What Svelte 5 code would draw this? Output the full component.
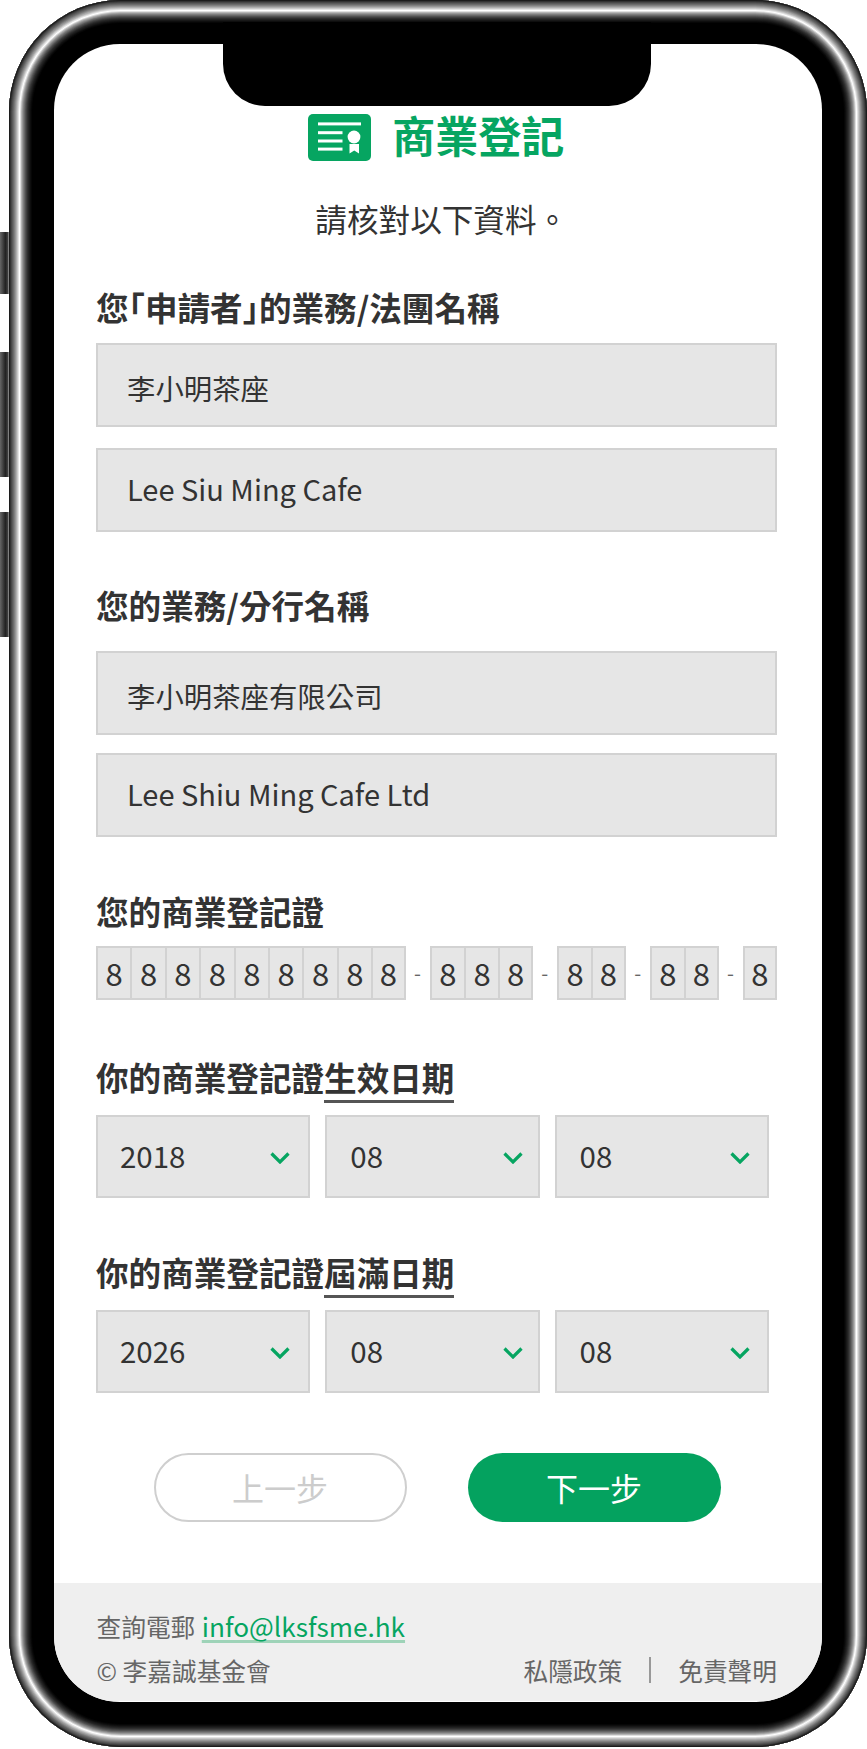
<script>
  const cert = [
    ['8', '8', '8', '8', '8', '8', '8', '8', '8'],
    ['8', '8', '8'],
    ['8', '8'],
    ['8', '8'],
    ['8'],
  ];

  const dates = [
    { before: '你的商業登記證', mark: '生效日期', year: '2018', cls: 'first' },
    { before: '你的商業登記證', mark: '屆滿日期', year: '2026', cls: 'second' },
  ];
</script>

<div class="device">
  <span class="side side--a"></span>
  <span class="side side--b"></span>
  <span class="side side--c"></span>

  <div class="phone">
    <div class="notch"></div>
    <main class="screen">
      <header class="brand">
        <svg class="brand__icon" viewBox="0 0 63 47" aria-hidden="true">
          <rect width="63" height="47" rx="5" fill="#06a561" />
          <g fill="#fff">
            <rect x="10" y="8.4" width="43" height="3" />
            <rect x="10" y="17.2" width="24.5" height="3" />
            <rect x="10" y="25.5" width="24.5" height="3" />
            <rect x="10" y="33.6" width="24.5" height="3" />
            <circle cx="46" cy="23" r="6.4" />
            <path d="M41.5 30h9.5v9.5l-4.75-3-4.75 3z" />
          </g>
        </svg>
        <span class="brand__name">商業登記</span>
      </header>

      <p class="intro">請核對以下資料。</p>

      <form class="form">
        <h2 class="label label--first">您<span class="half">「</span>申請者<span class="half">」</span>的業務/法團名稱</h2>
        <div class="field">李小明茶座</div>
        <div class="field field--next field--latin">Lee Siu Ming Cafe</div>

        <h2 class="label label--branch">您的業務/分行名稱</h2>
        <div class="field">李小明茶座有限公司</div>
        <div class="field field--close field--latin">Lee Shiu Ming Cafe Ltd</div>

        <h2 class="label label--cert">您的商業登記證</h2>
        <div class="cert">
          {#each cert as group, i}
            {#if i > 0}<span class="cert__dash">-</span>{/if}
            <div class="cert__group">
              {#each group as digit}
                <span class="cert__box">{digit}</span>
              {/each}
            </div>
          {/each}
        </div>

        {#each dates as date}
          <h2 class="label label--date label--{date.cls}">{date.before}<u>{date.mark}</u></h2>
          <div class="dates">
            {#each [date.year, '08', '08'] as value}
              <div class="select">
                <span>{value}</span>
                <svg viewBox="0 0 20 12" aria-hidden="true">
                  <path d="M1.5 1.5 10 10l8.5-8.5" fill="none" stroke="#06a561" stroke-width="3.2" />
                </svg>
              </div>
            {/each}
          </div>
        {/each}

        <div class="actions">
          <button type="button" class="btn btn--prev">上一步</button>
          <button type="button" class="btn btn--next">下一步</button>
        </div>
      </form>

      <footer class="footer">
        <div class="footer__row">查詢電郵 <a href="#top" class="footer__mail">info@lksfsme.hk</a></div>
        <div class="footer__row footer__row--split">
          <span>© 李嘉誠基金會</span>
          <nav class="footer__links">
            <span>私隱政策</span>
            <i></i>
            <span>免責聲明</span>
          </nav>
        </div>
      </footer>
    </main>
  </div>
</div>

<style>
  :global(body) {
    margin: 0;
    background: #fff;
  }

  * {
    box-sizing: border-box;
  }

  .device {
    position: relative;
    width: 867px;
    height: 1749px;
    overflow: hidden;
    padding-left: 9px;
    font-family: 'Noto Sans CJK TC', 'Noto Sans', sans-serif;
    color: #333;
  }

  .side {
    position: absolute;
    left: 0;
    width: 9px;
    background: linear-gradient(90deg, #666, #222 60%, #444 90%, #ccc);
  }
  .side--a {
    top: 232px;
    height: 62px;
  }
  .side--b {
    top: 352px;
    height: 125px;
  }
  .side--c {
    top: 512px;
    height: 125px;
  }

  .phone {
    position: relative;
    width: 858px;
    height: 1747px;
    padding: 44px 45px 45px 44.5px;
    border-radius: 112px;
    background: #000;
    box-shadow:
      inset 0 0 0 1px #1c1c1c,
      inset 0 0 0 2px #333,
      inset 0 0 0 3px #484848,
      inset 0 0 0 4px #5a5a5a,
      inset 0 0 0 5px #6c6c6c,
      inset 0 0 0 6px #808080,
      inset 0 0 0 7px #969696,
      inset 0 0 0 8px #aeaeae,
      inset 0 0 0 9px #c8c8c8,
      inset 0 0 0 10px #e4e4e4,
      inset 0 0 0 11px #fff,
      inset 0 0 0 12px #e0e0e0,
      inset 0 0 0 13px #b4b4b4,
      inset 0 0 0 14px #969696,
      inset 0 0 0 15px #7c7c7c,
      inset 0 0 0 16px #666,
      inset 0 0 0 17px #505050,
      inset 0 0 0 18px #3e3e3e,
      inset 0 0 0 19px #2e2e2e,
      inset 0 0 0 20px #222,
      inset 0 0 0 21px #181818,
      inset 0 0 0 22px #0e0e0e,
      inset 0 0 0 23px #060606;
  }

  .notch {
    position: absolute;
    top: 22px;
    left: 214px;
    width: 428px;
    height: 84px;
    border-radius: 0 0 42px 42px;
    background: #000;
  }

  .screen {
    display: flex;
    flex-direction: column;
    height: 100%;
    overflow: hidden;
    border-radius: 66px;
    background: #fff;
    padding-top: 70px;
  }

  .brand {
    display: flex;
    justify-content: center;
    align-items: center;
    gap: 21px;
    height: 47px;
    margin-right: 3px;
  }
  .brand__icon {
    width: 63px;
    height: 47px;
  }
  .brand__name {
    padding-bottom: 6px;
    font-size: 43px;
    line-height: 47px;
    font-weight: 700;
    color: #06a561;
  }

  .intro {
    margin: 39px 0 0 8px;
    text-align: center;
    font-size: 31.6px;
    line-height: 36px;
  }

  .form {
    flex: 1;
    padding: 0 45px 0 42.5px;
  }

  .label {
    margin: 0;
    font-size: 32.6px;
    line-height: 40px;
    font-weight: 600;
  }
  .label u {
    text-decoration: none;
    border-bottom: 3px solid #555;
  }
  .half {
    font-feature-settings: 'halt';
  }
  .label--first {
    margin-top: 51px;
  }
  .label--branch {
    margin-top: 53px;
  }
  .label--cert {
    margin-top: 54px;
  }
  .label--date {
    margin-top: 56.5px;
  }
  .label--second {
    margin-top: 54px;
  }

  .field {
    display: flex;
    align-items: center;
    height: 84px;
    margin-top: 16px;
    padding: 4px 0 0 29px;
    border: 2px solid #d2d2d2;
    background: #e6e6e6;
    font-size: 28.4px;
  }
  .label--branch + .field {
    margin-top: 26px;
  }
  .field--latin {
    padding: 0 0 4px 29px;
    font-size: 29px;
  }
  .field--next {
    margin-top: 21px;
  }
  .field--close {
    margin-top: 17.5px;
  }

  .cert {
    display: flex;
    margin-top: 15.5px;
  }
  .cert__group {
    display: flex;
  }
  .cert__box {
    width: 34.4px;
    height: 54px;
    border: 2px solid #d2d2d2;
    border-right-width: 0;
    background: #e6e6e6;
    text-align: center;
    font-size: 31px;
    line-height: 50px;
  }
  .cert__box:last-child {
    border-right-width: 2px;
  }
  .cert__dash {
    width: 24.2px;
    text-align: center;
    color: #666;
    font-size: 20px;
    line-height: 54px;
  }

  .dates {
    display: flex;
    gap: 15px;
    margin-top: 18px;
  }
  .select {
    display: flex;
    justify-content: space-between;
    align-items: center;
    width: 214.3px;
    height: 83px;
    padding: 0 17px 2px 23px;
    border: 2px solid #d2d2d2;
    background: #e6e6e6;
    font-size: 29.5px;
  }
  .select:nth-child(1) {
    padding: 0 18px 2px 22px;
  }
  .select:nth-child(2) {
    padding-right: 15px;
  }
  .select svg {
    width: 20px;
    height: 12px;
    margin-top: 5px;
  }

  .actions {
    display: flex;
    justify-content: center;
    gap: 61px;
    margin: 60px 0 0 1px;
  }
  .btn {
    width: 253px;
    height: 69px;
    border-radius: 35px;
    font: inherit;
    font-size: 32px;
    line-height: 1;
  }
  .btn--prev {
    border: 2px solid #cfcfcf;
    background: #fff;
    color: #ccc;
  }
  .btn--next {
    border: 0;
    background: #04a25f;
    color: #fff;
  }

  .footer {
    height: 118px;
    margin-bottom: 1px;
    padding: 25px 45px 0 43px;
    background: #efefef;
    color: #666;
    font-size: 24.7px;
    line-height: 36px;
  }
  .footer__row + .footer__row {
    margin-top: 8px;
  }
  .footer__row--split {
    display: flex;
    justify-content: space-between;
  }
  .footer__mail {
    margin-left: 1px;
    color: #06a561;
    font-size: 26.2px;
    text-decoration: underline 3px #9ed3b8;
    text-decoration-skip-ink: none;
    text-underline-offset: 3px;
  }
  .footer__links {
    display: flex;
    align-items: center;
    gap: 27px;
  }
  .footer__links i {
    width: 2px;
    height: 26px;
    background: #999;
  }
</style>
